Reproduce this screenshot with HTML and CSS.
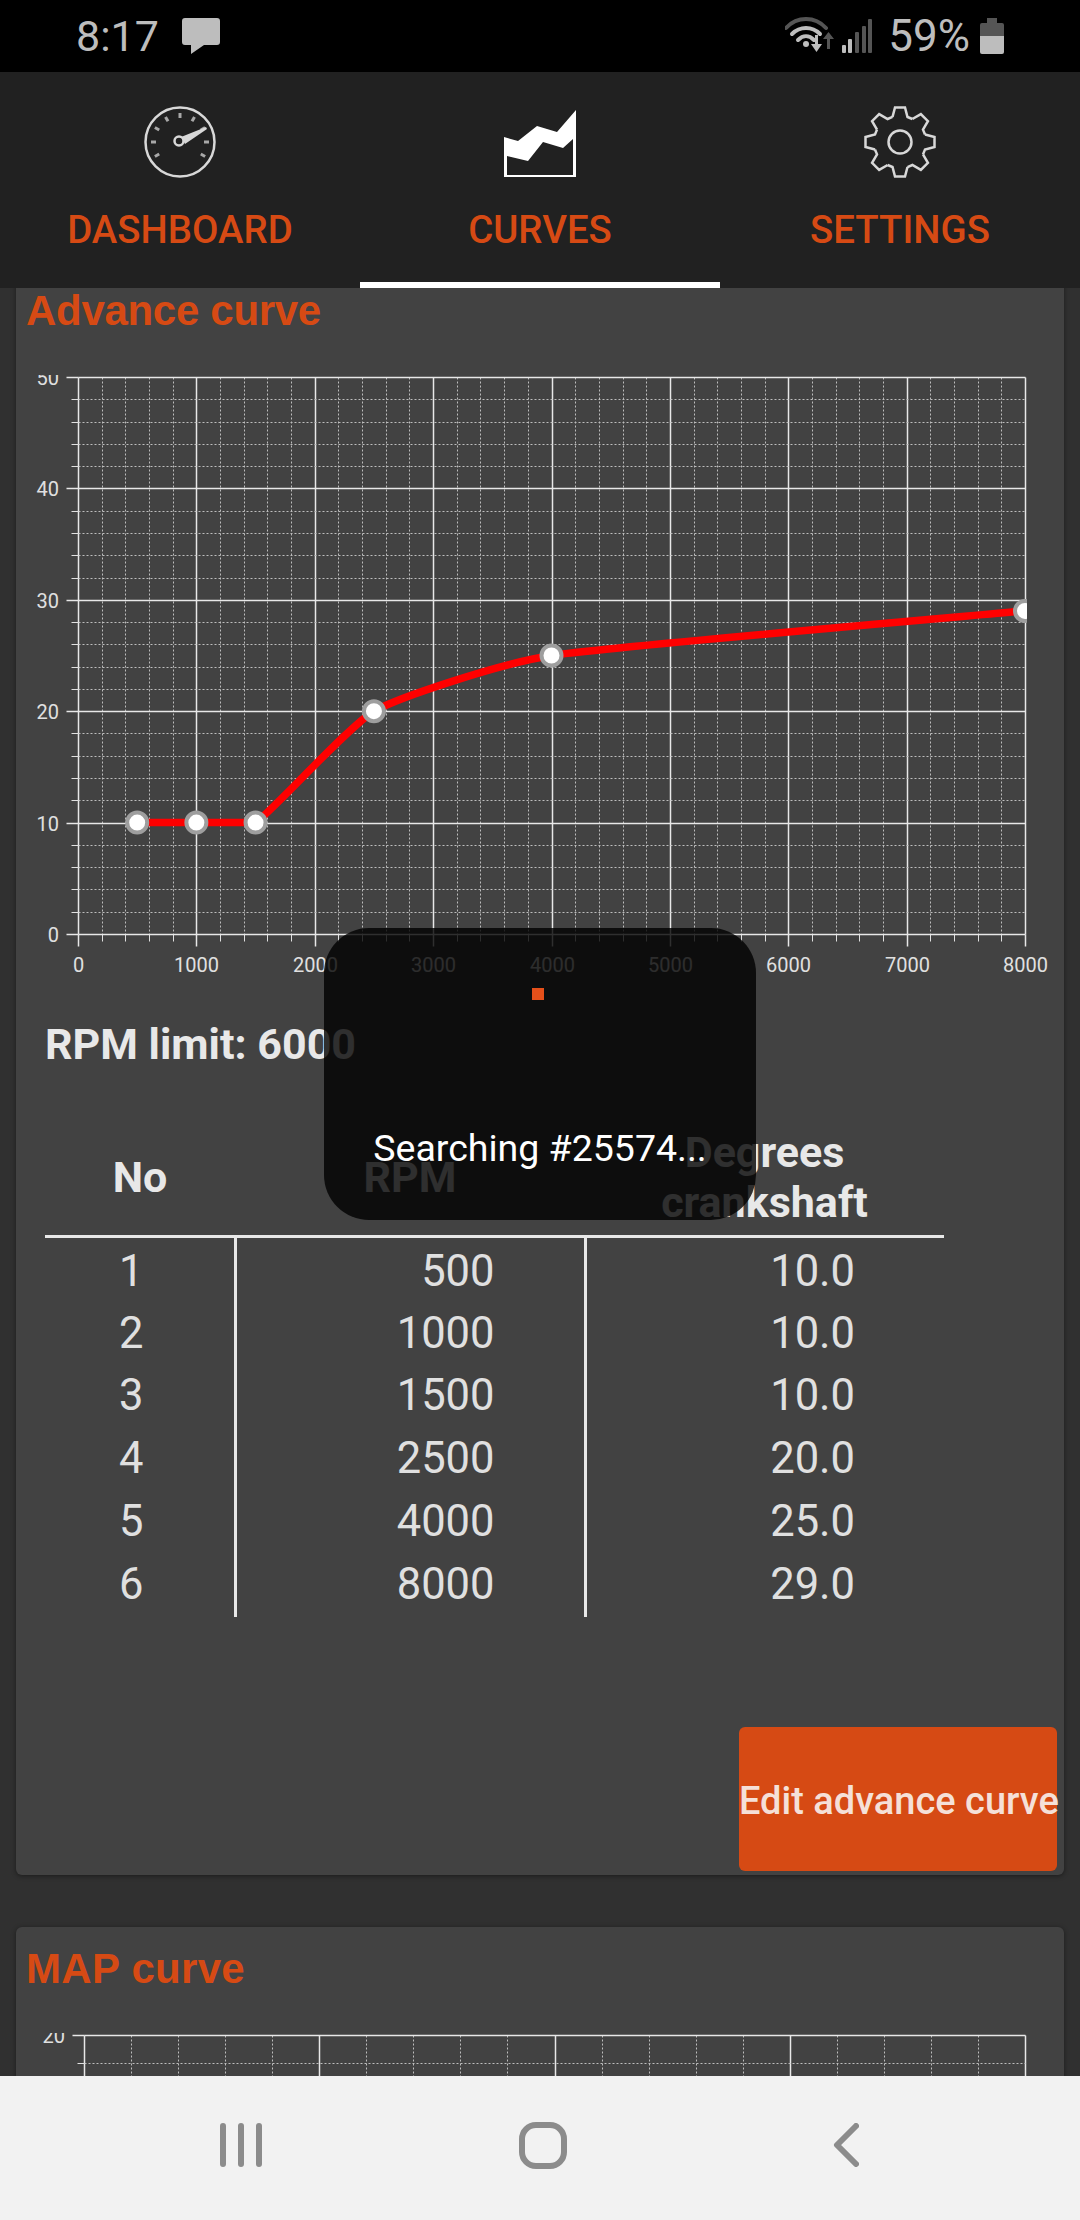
FILE: index.html
```html
<!DOCTYPE html>
<html lang="en">
<head>
    <meta charset="UTF-8">
    <meta name="viewport" content="width=device-width, initial-scale=1.0">
    <title>Curves</title>
    <link rel="stylesheet" href="styles.css">
</head>
<body>
    <div class="status-bar">
        <span class="status-time">8:17</span>
        <svg class="status-msg" width="38" height="36" viewBox="0 0 38 36">
            <path d="M3 0H35a3 3 0 0 1 3 3V24a3 3 0 0 1-3 3H22L9 36V27H3a3 3 0 0 1-3-3V3a3 3 0 0 1 3-3Z"/>
        </svg>
        <span class="status-spacer"></span>
        <svg class="status-wifi" width="50" height="38" viewBox="0 0 50 38">
            <path class="dim-line" d="M1 11C12 -1 30 -1 41 11"/>
            <path class="bright-line" d="M7 17C15 9 27 9 35 17"/>
            <path class="bright-line" d="M13 23C18 18 24 18 29 23"/>
            <circle class="bright-fill" cx="21" cy="27" r="3"/>
            <path class="bright-fill" d="M30 18h3v9h4l-5.500 8-5.500-8h4Z"/>
            <path class="dim-fill" d="M42 32h3v-10h4l-5.500-7-5.500 7h4Z"/>
        </svg>
        <svg class="status-signal" width="31" height="34" viewBox="0 0 31 34">
            <rect class="bright-fill" x="0" y="26" width="4" height="8" rx="1"/>
            <rect class="bright-fill" x="6" y="20" width="4" height="14" rx="1"/>
            <rect class="dim-fill" x="13" y="13" width="4" height="21" rx="1"/>
            <rect class="dim-fill" x="20" y="7" width="4" height="27" rx="1"/>
            <rect class="dim-fill" x="26" y="0" width="4" height="34" rx="1"/>
        </svg>
        <span class="status-battery-text">59%</span>
        <svg class="status-battery" width="24" height="36" viewBox="0 0 24 36">
            <path class="dim-fill" d="M7 0H17V5H22a2 2 0 0 1 2 2V18H0V7a2 2 0 0 1 2-2H7Z"/>
            <path class="bright-fill" d="M0 18H24V34a2 2 0 0 1-2 2H2a2 2 0 0 1-2-2Z"/>
        </svg>
    </div>

    <div class="tabs">
        <div class="tab">
            <svg class="tab-icon" width="72" height="72" viewBox="-36 -36 72 72">
                <circle class="icon-line" r="34.500"/>
                <g class="dial-ticks">
                    <path d="M0 -29V-24"/>
                    <path d="M0 -29V-24" transform="rotate(30)"/>
                    <path d="M0 -29V-24" transform="rotate(60)"/>
                    <path d="M0 -29V-24" transform="rotate(90)"/>
                    <path d="M0 -29V-24" transform="rotate(120)"/>
                    <path d="M0 -29V-24" transform="rotate(-30)"/>
                    <path d="M0 -29V-24" transform="rotate(-60)"/>
                    <path d="M0 -29V-24" transform="rotate(-90)"/>
                    <path d="M0 -29V-24" transform="rotate(-120)"/>
                </g>
                <path class="dial-needle" d="M1 -5L26 -15L27 -13L5 2Z"/>
                <circle class="icon-line" cx="-1" cy="-1" r="4.500"/>
            </svg>
            <span class="tab-label">DASHBOARD</span>
        </div>
        <div class="tab tab-active">
            <svg class="tab-icon curves-icon" width="72" height="68" viewBox="0 0 72 68">
                <path fill-rule="evenodd" d="M0 27L14 31L33 16L53 22L72 0V67H0ZM3 46V65H69V29L59 38L39 32L24 51Z"/>
            </svg>
            <span class="tab-label">CURVES</span>
        </div>
        <div class="tab">
            <svg class="tab-icon" width="72" height="72" viewBox="-36 -36 72 72">
                <defs>
                    <polyline id="gear-tooth" points="-7.500,-25 -5,-34.500 5,-34.500 7.500,-25 12.400,-23"/>
                </defs>
                <g class="icon-line">
                    <use href="#gear-tooth"/>
                    <use href="#gear-tooth" transform="rotate(45)"/>
                    <use href="#gear-tooth" transform="rotate(90)"/>
                    <use href="#gear-tooth" transform="rotate(135)"/>
                    <use href="#gear-tooth" transform="rotate(180)"/>
                    <use href="#gear-tooth" transform="rotate(225)"/>
                    <use href="#gear-tooth" transform="rotate(270)"/>
                    <use href="#gear-tooth" transform="rotate(315)"/>
                    <circle r="11.500"/>
                </g>
            </svg>
            <span class="tab-label">SETTINGS</span>
        </div>
    </div>

    <div class="content">
        <div class="card card-first">
            <h2 class="card-title">Advance curve</h2>
            <svg class="chart" id="advanceChart" width="1047" height="612"></svg>
            <p class="rpm-limit">RPM limit: 6000</p>
            <table class="curve-table">
                <thead>
                    <tr>
                        <th>No</th>
                        <th>RPM</th>
                        <th>Degrees<br>crankshaft</th>
                    </tr>
                </thead>
                <tbody>
                    <tr><td>1</td><td>500</td><td>10.0</td></tr>
                    <tr><td>2</td><td>1000</td><td>10.0</td></tr>
                    <tr><td>3</td><td>1500</td><td>10.0</td></tr>
                    <tr><td>4</td><td>2500</td><td>20.0</td></tr>
                    <tr><td>5</td><td>4000</td><td>25.0</td></tr>
                    <tr><td>6</td><td>8000</td><td>29.0</td></tr>
                </tbody>
            </table>
            <div class="card-actions">
                <button class="edit-btn">Edit advance curve</button>
            </div>
        </div>

        <div class="card card-map">
            <h2 class="card-title">MAP curve</h2>
            <svg class="chart" id="mapChart" width="1047" height="60"></svg>
        </div>
    </div>

    <div class="nav-bar">
        <svg class="nav-recent" width="42" height="44" viewBox="0 0 42 44">
            <path class="nav-line" d="M3 3V41M21 3V41M39 3V41"/>
        </svg>
        <svg class="nav-home" width="48" height="47" viewBox="0 0 48 47">
            <rect class="nav-line" x="3" y="3" width="42" height="41" rx="14"/>
        </svg>
        <svg class="nav-back" width="26" height="44" viewBox="0 0 26 44">
            <path class="nav-line" d="M23 3L4 22L23 41"/>
        </svg>
    </div>

    <div class="toast">
        <div class="toast-dot"></div>
        <div class="toast-text">Searching #25574...</div>
    </div>

    <script>
        const SVG_NS = 'http://www.w3.org/2000/svg';

        function add(parent, name, attrs, text) {
            const el = document.createElementNS(SVG_NS, name);
            Object.keys(attrs).forEach(key => el.setAttribute(key, attrs[key]));
            if (text !== undefined) el.textContent = text;
            parent.appendChild(el);
            return el;
        }

        // Snap to the pixel so 1px grid lines stay sharp
        function crisp(v) {
            return Math.round(v) + 0.5;
        }

        // Slightly rounded line through the points, control points kept inside each segment's range
        function curvePath(pts, tension) {
            const at = i => pts[Math.max(0, Math.min(pts.length - 1, i))];
            const cap = (v, a, b) => Math.max(Math.min(a, b), Math.min(Math.max(a, b), v));
            let d = 'M' + pts[0][0] + ' ' + pts[0][1];
            for (let i = 0; i < pts.length - 1; i++) {
                const y1 = pts[i][1], y2 = pts[i + 1][1];
                const c1x = pts[i][0] + (at(i + 1)[0] - at(i - 1)[0]) * tension;
                const c1y = cap(y1 + (at(i + 1)[1] - at(i - 1)[1]) * tension, y1, y2);
                const c2x = pts[i + 1][0] - (at(i + 2)[0] - at(i)[0]) * tension;
                const c2y = cap(y2 - (at(i + 2)[1] - at(i)[1]) * tension, y1, y2);
                d += 'C' + c1x + ' ' + c1y + ' ' + c2x + ' ' + c2y + ' ' + pts[i + 1][0] + ' ' + y2;
            }
            return d;
        }

        function drawChart(svg, c) {
            const stepX = (c.right - c.left) / (c.xMax / c.xStep) / 5;
            const stepY = (c.bottom - c.top) / (c.yMax / c.yStep) / 5;
            const countX = c.xMax / c.xStep * 5;
            const countY = c.yMax / c.yStep * 5;
            const top = crisp(c.top), bottom = crisp(c.bottom), left = crisp(c.left), right = crisp(c.right);

            for (let i = 0; i <= countX; i++) {
                const x = crisp(c.left + i * stepX);
                const major = i % 5 === 0;
                add(svg, 'line', { x1: x, x2: x, y1: top, y2: bottom, class: major ? 'grid-major' : 'grid-minor' });
                add(svg, 'line', { x1: x, x2: x, y1: bottom, y2: bottom + (major ? 12 : 7), class: major ? 'grid-major' : 'tick-minor' });
                if (major) {
                    add(svg, 'text', { x: x, y: c.bottom + 38, class: 'axis-label', 'text-anchor': 'middle' }, i / 5 * c.xStep);
                }
            }
            for (let i = 0; i <= countY; i++) {
                const y = crisp(c.top + i * stepY);
                const major = i % 5 === 0;
                add(svg, 'line', { x1: left, x2: right, y1: y, y2: y, class: major ? 'grid-major' : 'grid-minor' });
                add(svg, 'line', { x1: left - (major ? 12 : 7), x2: left, y1: y, y2: y, class: major ? 'grid-major' : 'tick-minor' });
                if (major) {
                    add(svg, 'text', { x: c.left - 19, y: y + 7, class: 'axis-label', 'text-anchor': 'end' }, c.yMax - i / 5 * c.yStep);
                }
            }

            if (!c.points) return;
            const clip = add(add(svg, 'defs', {}), 'clipPath', { id: svg.id + 'Clip' });
            add(clip, 'rect', { x: 0, y: 0, width: c.right + 2, height: c.bottom + 20 });
            const plot = add(svg, 'g', { 'clip-path': 'url(#' + svg.id + 'Clip)' });
            const pts = c.points.map(p => [
                c.left + p[0] / c.xMax * (c.right - c.left),
                c.bottom - p[1] / c.yMax * (c.bottom - c.top)
            ]);
            add(plot, 'path', { d: curvePath(pts, 0.08), class: 'curve-line' });
            pts.forEach(p => add(plot, 'circle', { cx: p[0], cy: p[1], r: 10, class: 'curve-point' }));
        }

        // Left and right are counted from the card's edge
        drawChart(document.getElementById('advanceChart'), {
            left: 62, right: 1009, top: 2, bottom: 559,
            xMax: 8000, xStep: 1000, yMax: 50, yStep: 10,
            points: [[500, 10], [1000, 10], [1500, 10], [2500, 20], [4000, 25], [8000, 29]]
        });
        drawChart(document.getElementById('mapChart'), {
            left: 68, right: 1009, top: 2, bottom: 277,
            xMax: 4000, xStep: 1000, yMax: 20, yStep: 10
        });
    </script>
</body>
</html>
```

FILE: styles.css
```css
* {
    box-sizing: border-box;
}

html, body {
    margin: 0;
    padding: 0;
}

body {
    font-family: Roboto, "Liberation Sans", sans-serif;
    width: 1080px;
    height: 2220px;
    background-color: #303030;
    display: flex;
    flex-direction: column;
    position: relative;
    overflow: hidden;
}

/* Status bar */
.status-bar {
    height: 72px;
    flex: none;
    background-color: #000;
    color: #bdbdbd;
    display: flex;
    align-items: center;
    padding: 0 76px 0 76px;
    font-size: 44px;
}

.status-time {
    font-size: 43px;
}

.status-msg {
    margin-left: 23px;
    fill: #bdbdbd;
}

.status-spacer {
    flex: 1;
}

.status-signal {
    margin-left: 7px;
}

.status-battery-text {
    margin-left: 15px;
}

.status-battery {
    margin-left: 10px;
}

.bright-fill {
    fill: #bdbdbd;
}

.dim-fill {
    fill: #555;
}

.bright-line, .dim-line {
    fill: none;
    stroke-width: 4;
    stroke-linecap: round;
}

.bright-line {
    stroke: #bdbdbd;
}

.dim-line {
    stroke: #555;
}

/* Tabs */
.tabs {
    height: 216px;
    flex: none;
    background-color: #212121;
    display: grid;
    grid-template-columns: repeat(3, 1fr);
    position: relative;
    z-index: 2;
}

.tab {
    display: flex;
    flex-direction: column;
    align-items: center;
    padding-top: 34px;
    border-bottom: 6px solid transparent;
}

.tab-active {
    border-bottom-color: #fff;
}

.tab-icon {
    display: block;
    margin-bottom: 30px;
}

.curves-icon {
    margin-top: 4px;
    fill: #fff;
}

.icon-line {
    fill: none;
    stroke: #d8d8d8;
    stroke-width: 2.500;
}

.dial-ticks {
    stroke: #a8a8a8;
    stroke-width: 3;
}

.dial-needle {
    fill: #d8d8d8;
}

.tab-label {
    color: #d64a14;
    font-size: 38.400px;
    font-weight: 500;
    line-height: 44px;
}

/* Cards */
.content {
    flex: 1;
    min-height: 0;
    overflow: hidden;
    padding: 0 16px;
}

.card {
    background-color: #424242;
    border-radius: 6px;
    box-shadow: 0 1px 5px rgba(0, 0, 0, 0.45);
}

.card-first {
    margin-top: -19px;
    height: 1606px;
}

.card-map {
    margin-top: 52px;
}

.card-title {
    margin: 0;
    padding: 18px 0 0 10px;
    font-family: "Liberation Sans", Arial, sans-serif;
    font-size: 42px;
    font-weight: bold;
    line-height: 48px;
    color: #d64a14;
}

.card-first .card-title {
    letter-spacing: -0.300px;
}

.card-map .card-title {
    letter-spacing: 0.300px;
}

.chart {
    display: block;
    margin-top: 40px;
}

.grid-major {
    stroke: #e8e8e8;
    stroke-width: 1.500;
}

.tick-minor {
    stroke: #e0e0e0;
    stroke-width: 1;
}

.grid-minor {
    stroke: #bdbdbd;
    stroke-width: 1;
    stroke-dasharray: 2 2;
}

.axis-label {
    fill: #e0e0e0;
    font-size: 20px;
}

.curve-line {
    fill: none;
    stroke: #f00;
    stroke-width: 7.500;
}

.curve-point {
    fill: #fff;
    stroke: #9e9e9e;
    stroke-width: 4;
}

.rpm-limit {
    margin: 33px 0 0 29px;
    font-size: 43px;
    font-weight: 700;
    line-height: 48px;
    color: #e8e8e8;
}

/* Table */
.curve-table {
    margin: 59px 0 0 29px;
    width: 899px;
    border-collapse: collapse;
    table-layout: fixed;
    color: #e0e0e0;
    font-size: 43.500px;
}

.curve-table th {
    font-size: 43px;
    font-weight: 700;
    line-height: 50px;
    color: #e8e8e8;
    padding: 0 0 8px;
    border-bottom: 3px solid #e8e8e8;
    text-align: center;
}

.curve-table td {
    height: 62.800px;
    padding: 5px 0 0;
    text-align: right;
}

.curve-table tr:last-child td {
    height: 66.800px;
    padding-bottom: 4px;
}

.curve-table th:nth-child(1), .curve-table td:nth-child(1) {
    width: 190px;
}

.curve-table th:nth-child(2), .curve-table td:nth-child(2) {
    width: 350px;
}

.curve-table td:nth-child(1) {
    text-align: center;
    padding-right: 16px;
}

.curve-table td:nth-child(2) {
    padding-right: 89px;
}

.curve-table td:nth-child(3) {
    padding-right: 89px;
}

.curve-table td + td {
    border-left: 3px solid #e8e8e8;
}

.card-actions {
    display: flex;
    justify-content: flex-end;
    margin-top: 110px;
    padding-right: 7px;
}

.edit-btn {
    width: 318px;
    height: 144px;
    padding: 3px 0 0;
    border: none;
    border-radius: 6px;
    background-color: #d64a14;
    color: #f5e0d8;
    font-family: Roboto, sans-serif;
    font-size: 38px;
    font-weight: 500;
    white-space: nowrap;
}

/* Bottom navigation */
.nav-bar {
    height: 144px;
    flex: none;
    background-color: #f2f2f2;
    position: relative;
    z-index: 2;
    display: flex;
    align-items: center;
    padding: 0 0 6px 220px;
}

.nav-home {
    margin-left: 257px;
}

.nav-back {
    margin-left: 266px;
}

.nav-line {
    fill: none;
    stroke: #8c8c8c;
    stroke-width: 6;
    stroke-linecap: round;
    stroke-linejoin: round;
}

/* Toast over the page */
.toast {
    position: absolute;
    left: 324px;
    top: 928px;
    width: 432px;
    height: 292px;
    border-radius: 45px;
    background-color: rgba(0, 0, 0, 0.8);
    z-index: 3;
}

.toast-dot {
    position: absolute;
    left: 208px;
    top: 60px;
    width: 12px;
    height: 12px;
    background-color: #e5501a;
}

.toast-text {
    position: absolute;
    left: 0;
    right: 0;
    top: 196px;
    text-align: center;
    color: #fff;
    font-size: 37.500px;
    line-height: 48px;
}
```
